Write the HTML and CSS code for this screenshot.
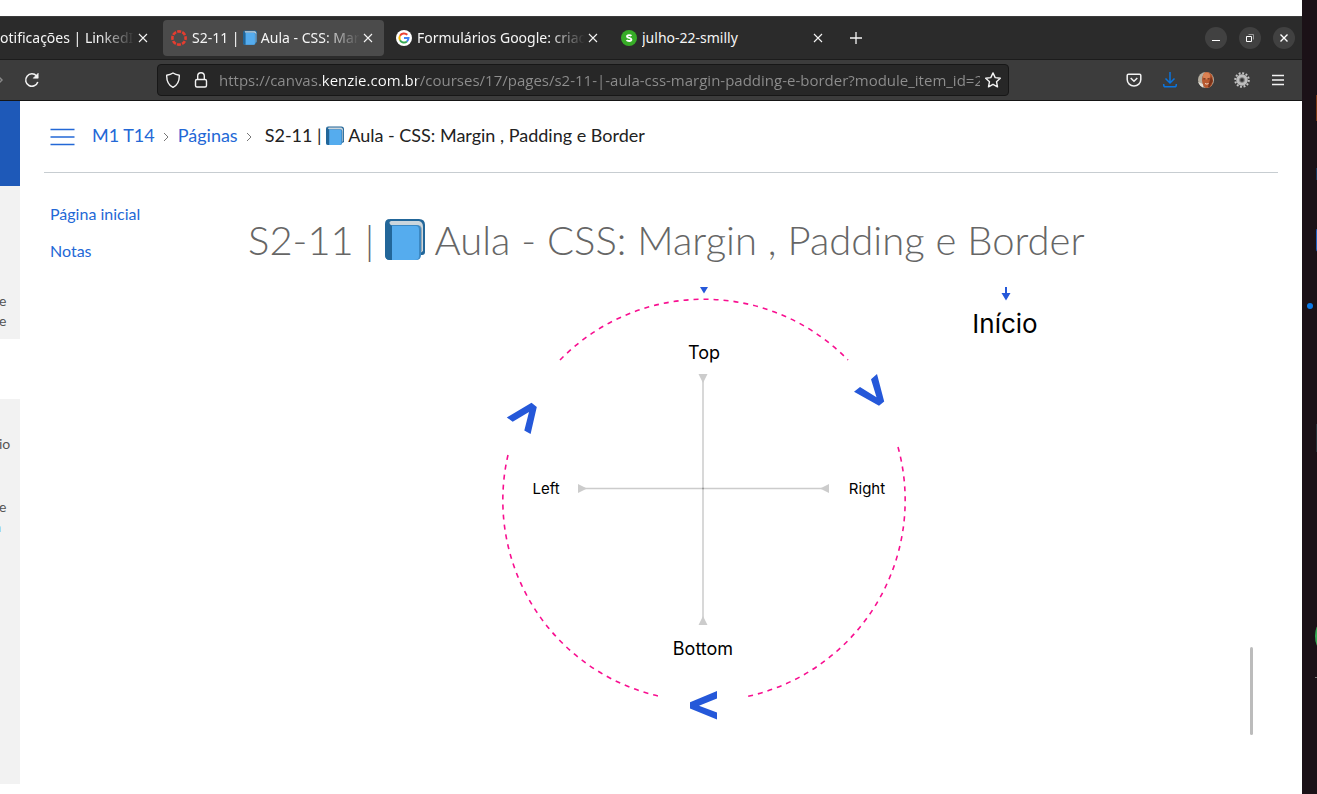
FILE: index.html
```html
<!DOCTYPE html>
<html lang="pt-BR">
<head>
<meta charset="utf-8">
<title>S2-11 | Aula - CSS: Margin , Padding e Border</title>
<link rel="stylesheet" href="styles.css">
</head>
<body>
<svg class="defs" aria-hidden="true">
  <symbol id="book" viewBox="0 0 40 42">
    <path d="M5 1h29q6 0 6 6v27q0 3-3 3h-4L3 8q0-7 2-7z" fill="#226699"/>
    <path d="M6 3h28q4 1 4 6v24l-4 3L5 8q-2-4 1-5z" fill="#ccd6dd"/>
    <path d="M35 7q2 2 2 6v20l-3 3V9z" fill="#99aab5"/>
    <path d="M0 7q2 0 5 0h27q4 0 4 5v25q0 5-5 5H5q-5 0-5-5z" fill="#3b88c3"/>
    <path d="M7 8h24q3 0 3 4v26q0 4-4 4H7z" fill="#55acee"/>
    <path d="M0 6q0-5 5-5 -3 3 2 7v34H5q-5 0-5-5z" fill="#226699"/>
  </symbol>
  <symbol id="close" viewBox="0 0 10 10"><path d="M1 1l8 8M9 1l-8 8" stroke="currentColor" stroke-width="1.1" fill="none"/></symbol>
</svg>
<div class="window">
  <div class="tabs">
    <div class="tab tab-cut"><span class="tab-title faded">otificações | LinkedIn</span><button class="tab-close" aria-label="Fechar"><svg><use href="#close"/></svg></button></div>
    <div class="tab active">
      <svg class="fav" viewBox="0 0 16 16"><circle cx="8" cy="8" r="6.6" fill="none" stroke="#e43d30" stroke-width="2.6" stroke-dasharray="4 1.18" stroke-dashoffset="2"/></svg>
      <span class="tab-title faded">S2-11 | <svg class="book-small"><use href="#book"/></svg> Aula - CSS: Marg</span><button class="tab-close" aria-label="Fechar"><svg><use href="#close"/></svg></button>
    </div>
    <div class="tab">
      <svg class="fav" viewBox="0 0 16 16"><circle cx="8" cy="8" r="8" fill="#fff"/><g fill="none" stroke-width="2"><path d="M4 5.7A4.6 4.6 0 0 1 11.3 4.8" stroke="#ea4335"/><path d="M4 10.3A4.8 4.8 0 0 1 4 5.7" stroke="#fbbc05"/><path d="M4 10.3A4.6 4.6 0 0 0 10.9 11.5" stroke="#34a853"/><path d="M8 8h4.5Q12.4 10.3 10.9 11.5" stroke="#4285f4"/></g></svg>
      <span class="tab-title faded">Formulários Google: criad</span><button class="tab-close" aria-label="Fechar"><svg><use href="#close"/></svg></button>
    </div>
    <div class="tab">
      <svg class="fav" viewBox="0 0 16 16"><circle cx="8" cy="8" r="8" fill="#37ac27"/><path d="M10.4 5.9C9.5 4.8 6 4.7 6 6.4c0 2 4.4 1 4.4 3.1 0 1.9-3.9 1.8-4.8.5" fill="none" stroke="#fff" stroke-width="1.9"/></svg>
      <span class="tab-title">julho-22-smilly</span><button class="tab-close" aria-label="Fechar"><svg><use href="#close"/></svg></button>
    </div>
    <button class="new-tab" aria-label="Nova aba"><svg viewBox="0 0 12 12"><path d="M6 0v12M0 6h12" stroke="currentColor" stroke-width="1.3"/></svg></button>
    <div class="controls">
      <button aria-label="Minimizar"><svg viewBox="0 0 22 22"><path d="M7 13.5h8" stroke="#fff"/></svg></button>
      <button aria-label="Restaurar"><svg viewBox="0 0 22 22" fill="none"><path d="M9.5 7.500h5v5" stroke="#999"/><path d="M7.500 9.500h5v5h-5z" stroke="#fff"/></svg></button>
      <button aria-label="Fechar janela"><svg viewBox="0 0 22 22"><path d="M7.500 7.500l7 7m0-7l-7 7" stroke="#fff" stroke-width="1.400"/></svg></button>
    </div>
  </div>
  <div class="toolbar">
    <button class="forward" aria-label="Avançar"><svg viewBox="0 0 4 12"><path d="M-3 1l5 5-5 5" fill="none" stroke="#888" stroke-width="1.500"/></svg></button>
    <button class="icon" aria-label="Recarregar"><svg viewBox="0 0 16 16" fill="none" stroke="currentColor" stroke-width="1.500"><path d="M13.800 10A6.200 6.200 0 1 1 12.600 4"/><path d="M14.200 1.200v5h-5z" fill="currentColor" stroke-width=".6"/></svg></button>
    <div class="urlbar">
      <svg class="glyph" viewBox="0 0 16 16" fill="none" stroke="currentColor" stroke-width="1.400" stroke-linejoin="round"><path d="M8 1Q10.500 2.600 14.300 3.200C14.500 9.500 12.500 13 8 15.400 3.500 13 1.500 9.500 1.700 3.200Q5.500 2.600 8 1z"/></svg>
      <svg class="glyph" viewBox="0 0 16 16" fill="none" stroke="currentColor" stroke-width="1.400"><rect x="2.500" y="7.500" width="11" height="7.500" rx="1.500"/><path d="M4.700 7.500V4a3.300 3.300 0 0 1 6.600 0V7.500"/></svg>
      <input class="url" type="text" aria-label="Endereço" value="https://canvas.kenzie.com.br/courses/17/pages/s2-11-|-aula-css-margin-padding-e-border?module_item_id=24">
      <svg class="glyph star" viewBox="0 0 16 16" fill="none" stroke="currentColor" stroke-width="1.400" stroke-linejoin="round"><path d="M8 .9l2.200 4.700 5.100.6-3.800 3.500 1 5.100L8 12.300l-4.500 2.500 1-5.100L.7 6.200l5.100-.6z"/></svg>
    </div>
    <div class="actions">
      <button class="icon" aria-label="Pocket"><svg viewBox="0 0 16 16" fill="none" stroke="currentColor" stroke-width="1.500"><path d="M2.500 2.200h11q1.300 0 1.300 1.300V7.500a6.800 6.500 0 0 1-13.600 0V3.500q0-1.300 1.300-1.300z"/><path d="M4.700 6L8 9.200 11.300 6"/></svg></button>
      <button class="icon download" aria-label="Downloads"><svg viewBox="0 0 16 16" fill="none" stroke="currentColor" stroke-width="1.500"><path d="M8 0v11M3.500 6.500L8 11l4.500-4.500M1.700 12v1q0 1.800 1.800 1.800h9q1.800 0 1.800-1.800v-1"/></svg></button>
      <button class="icon" aria-label="Conta"><svg viewBox="0 0 16 16"><clipPath id="round"><circle cx="8" cy="8" r="8"/></clipPath><g clip-path="url(#round)"><path fill="#b5aea0" d="M0 0h16v16H0z"/><path fill="#e4e0d8" d="M0 10l5 2v4H0z"/><ellipse cx="9.500" cy="8" rx="5.500" ry="8.500" fill="#b8592f"/><ellipse cx="8.500" cy="4" rx="3.500" ry="3.500" fill="#dc8253"/><path fill="#7a341b" d="M13 4l2 5-4 7-1-1z"/><path d="M5.500 6.800h2M9.500 6.800h2" stroke="#5b2814"/><path d="M7 11.500q2 1.300 3.500 0" stroke="#f1d7c8" fill="none"/></g></svg></button>
      <button class="icon" aria-label="Extensão"><svg viewBox="0 0 16 16"><circle cx="8" cy="8" r="6.800" fill="none" stroke="#c4c4c4" stroke-width="2" stroke-dasharray="1.900 1.660"/><circle cx="8" cy="8" r="4.300" fill="#777" stroke="#bdbdbd" stroke-width="3"/><circle cx="8" cy="8" r="1.700" fill="#333"/></svg></button>
      <button class="icon" aria-label="Menu"><svg viewBox="0 0 16 16"><path d="M2 3.500h12M2 8h12M2 12.500h12" stroke="currentColor" stroke-width="1.300"/></svg></button>
    </div>
  </div>
  <div class="page">
    <aside class="edge">
      <div class="edge-blue"></div>
      <div class="edge-card first"><p>e</p><p>e</p></div>
      <div class="edge-card second"><p>io</p><p class="later">e</p><p class="link">a</p></div>
    </aside>
    <div class="course">
      <header class="crumbs">
        <button class="menu" aria-label="Menu do curso"><svg viewBox="0 0 24 18"><path d="M0 1.500h24M0 9h24M0 16.500h24" stroke="currentColor" stroke-width="1.500"/></svg></button>
        <nav class="trail" aria-label="Trilha">
          <a href="#">M1 T14</a>
          <svg class="sep" viewBox="0 0 6 10"><path d="M1 1l4 4-4 4" fill="none" stroke="#777"/></svg>
          <a href="#">Páginas</a>
          <svg class="sep" viewBox="0 0 6 10"><path d="M1 1l4 4-4 4" fill="none" stroke="#777"/></svg>
          <span class="here">S2-11 | <svg class="book-crumb"><use href="#book"/></svg> Aula - CSS: Margin , Padding e Border</span>
        </nav>
      </header>
      <div class="columns">
        <nav class="side" aria-label="Curso"><a href="#">Página inicial</a><a href="#">Notas</a></nav>
        <main class="content">
          <h1>S2-11 | <svg class="book-title"><use href="#book"/></svg> Aula - CSS: Margin , Padding e Border</h1>
          <div class="viewer">
            <svg class="diagram" viewBox="449 287 600 448" role="img" aria-label="Sentido horário: Top, Right, Bottom, Left">
              <g fill="none" stroke="#f80f90" stroke-width="1.600" stroke-dasharray="5 5">
                <path d="M560 360A201 201 0 0 1 848 360"/>
                <path d="M898 447A201 201 0 0 1 745 697"/>
                <path d="M508 455A201 201 0 0 0 658 696"/>
              </g>
              <g fill="#2558d9">
                <path d="M700 287h8l-4 6.500z"/>
                <path d="M1005 287h2v6h3.500l-4.500 7.500-4.500-7.500h3.500z"/>
                <path d="M506.800 417.500l24.700-14.700 5.300 4.200-6.200 27-6.300-3.500 4.700-18.500-16.300 9.700z"/>
                <path d="M877 374l7.200 27.500-5.200 4.200-25-14 6-4.700 16.500 10.200-5.500-18z"/>
                <path d="M717 691v7.500l-18 7.200 18 6.800v7L690 708.500v-6.300z"/>
              </g>
              <g fill="#ccc"><path d="M698.500 374h9l-4.500 9zM698.500 625h9l-4.500-9zM578 484v9l9-4.500zM829 484v9l-9-4.500z"/></g>
              <path d="M703 380v238M584 488.500h238" stroke="#ccc" stroke-width="1.500"/>
              <path d="M702 488.500h2" stroke="#999" stroke-width="1.500"/>
              <g class="labels"><text x="704" y="359">Top</text><text x="703" y="655">Bottom</text><text class="minor" x="546" y="494">Left</text><text class="minor" x="867" y="494">Right</text><text class="major" x="1005" y="333">Início</text></g>
            </svg>
            <div class="thumb"></div>
          </div>
        </main>
      </div>
    </div>
  </div>
</div>
<div class="desktop">
  <svg viewBox="0 0 15 794" preserveAspectRatio="xMaxYMin slice"><circle cx="8" cy="306" r="3" fill="#0a78e6"/><path d="M14 95h1v26h-1z" fill="#7a3512"/><path d="M14 168h1v12h-1z" fill="#16365a"/><rect x="14" y="228" width="6" height="24" rx="3" fill="#1d5fc0"/><path d="M14 424h1v28h-1z" fill="#263036"/><ellipse cx="18" cy="636" rx="5" ry="12" fill="#34a853"/><path d="M13 677.500h2" stroke="#777"/></svg>
</div>
</body>
</html>
```
FILE: styles.css
```css
* { box-sizing: border-box; }
body { margin: 0; display: flex; min-height: 100vh; background: #fff; font-family: Lato, sans-serif; }
button { border: 0; padding: 0; background: none; color: inherit; display: flex; align-items: center; justify-content: center; flex: none; }
svg { display: block; }
a { color: #2368d6; text-decoration: none; }
p { margin: 0; }
.defs { position: absolute; width: 0; height: 0; }
.window { flex: 1; min-width: 0; padding-top: 16px; display: flex; flex-direction: column; }
.desktop { flex: none; width: 15px; background: #1b1117; overflow: hidden; }
.desktop svg { width: 15px; height: 794px; }

.tabs { display: flex; align-items: center; gap: 4px; height: 44px; background: #2b2b2b; border-top: 1px solid #3b3b3b; border-bottom: 1px solid #1c1c1c; color: #f5f5f5; font: 14px/20px "Noto Sans", sans-serif; }
.tab { display: flex; align-items: center; width: 221px; height: 36px; padding: 0 8px; border-radius: 4px; flex: none; }
.tab-cut { width: 159px; padding-left: 0; }
.active { background: #4b4b4b; }
.fav { width: 16px; height: 16px; margin-right: 5px; flex: none; }
.tab-title { flex: 1; min-width: 0; overflow: hidden; white-space: nowrap; }
.faded { -webkit-mask-image: linear-gradient(to left, transparent, #000 36px); mask-image: linear-gradient(to left, transparent, #000 36px); }
.tab-close { width: 16px; height: 20px; }
.tab-close svg { width: 10px; height: 10px; }
.book-small { display: inline-block; width: 14px; height: 15px; vertical-align: -2px; }
.new-tab { width: 36px; height: 36px; }
.new-tab svg { width: 12px; height: 12px; }
.controls { display: flex; gap: 12px; margin-left: auto; padding-right: 7px; }
.controls button { width: 22px; height: 22px; border-radius: 50%; background: #414141; }
.controls svg { width: 22px; height: 22px; }

.toolbar { display: flex; align-items: center; height: 41px; background: #3c3c3c; border-bottom: 1px solid #151515; color: #f3f3f3; }
.forward svg { width: 4px; height: 12px; }
.forward { width: 4px; }
.icon { width: 16px; height: 32px; }
.toolbar > .icon { margin-left: 20px; }
.icon svg { width: 16px; height: 16px; }
.download { color: #0a74de; }
.urlbar { flex: 1; min-width: 0; height: 32px; display: flex; align-items: center; margin-left: 117px; padding: 0 7px; background: #272727; border: 1px solid #171717; border-radius: 4px; }
.glyph { width: 16px; height: 16px; flex: none; margin-right: 12px; }
.star { margin: 0 0 0 5px; }
.url { flex: 1; min-width: 0; height: 28px; padding: 0; margin-left: -2px; border: 0; outline: 0; font: 15px/28px "Open Sans", sans-serif; color: transparent; background: linear-gradient(to right, #8e8e8e 101px, #fff 101px, #fff 198px, #8e8e8e 198px); -webkit-background-clip: text; background-clip: text; }
.actions { display: flex; gap: 20px; margin-left: 117px; padding-right: 16px; }

.page { flex: 1; display: flex; }
.edge { flex: none; width: 20px; margin-bottom: 10px; display: flex; flex-direction: column; overflow: hidden; color: #555; font-size: 14px; line-height: 20px; }
.edge-blue { height: 85px; background: #1e59b8; }
.edge-card { background: #f2f2f2; }
.edge-card p { margin-left: -1px; }
.first { height: 153px; padding-top: 105px; }
.second { flex: 1; margin-top: 60px; padding-top: 35px; }
.second .later { margin-top: 43px; }
.second .link { color: #2368d6; margin-left: -6px; }
.course { flex: 1; min-width: 0; padding: 0 24px; }
.crumbs { display: flex; align-items: center; height: 72px; border-bottom: 1px solid #c7cdd1; padding-left: 6px; }
.menu { color: #2368d6; }
.menu svg { width: 25px; height: 18px; }
.trail { display: flex; align-items: center; font-size: 18px; line-height: 24px; margin-left: 17px; padding-bottom: 4px; white-space: nowrap; }
.sep { width: 6px; height: 10px; margin: 4px 9px 0 8px; }
.here { color: #222; margin-left: 4px; }
.book-crumb { display: inline-block; width: 18px; height: 19px; vertical-align: -3px; }
.columns { display: flex; }
.side { width: 204px; flex: none; padding: 31px 0 0 6px; display: flex; flex-direction: column; gap: 17px; font-size: 16px; line-height: 20px; }
.content { flex: 1; min-width: 0; padding-right: 25px; }
h1 { margin: 39px 0 19px; font-size: 40px; line-height: 56px; font-weight: 300; color: #666; white-space: nowrap; }
.book-title { display: inline-block; width: 40px; height: 42px; vertical-align: -5px; }
.viewer { display: flex; align-items: flex-end; }
.diagram { flex: 1; min-width: 0; height: 448px; }
.thumb { width: 3px; height: 88px; border-radius: 2px; background: #bcbcbc; }
.labels { font: 18px Inter, sans-serif; text-anchor: middle; fill: #000; }
.minor { font-size: 15px; }
.major { font-size: 26px; }
```
